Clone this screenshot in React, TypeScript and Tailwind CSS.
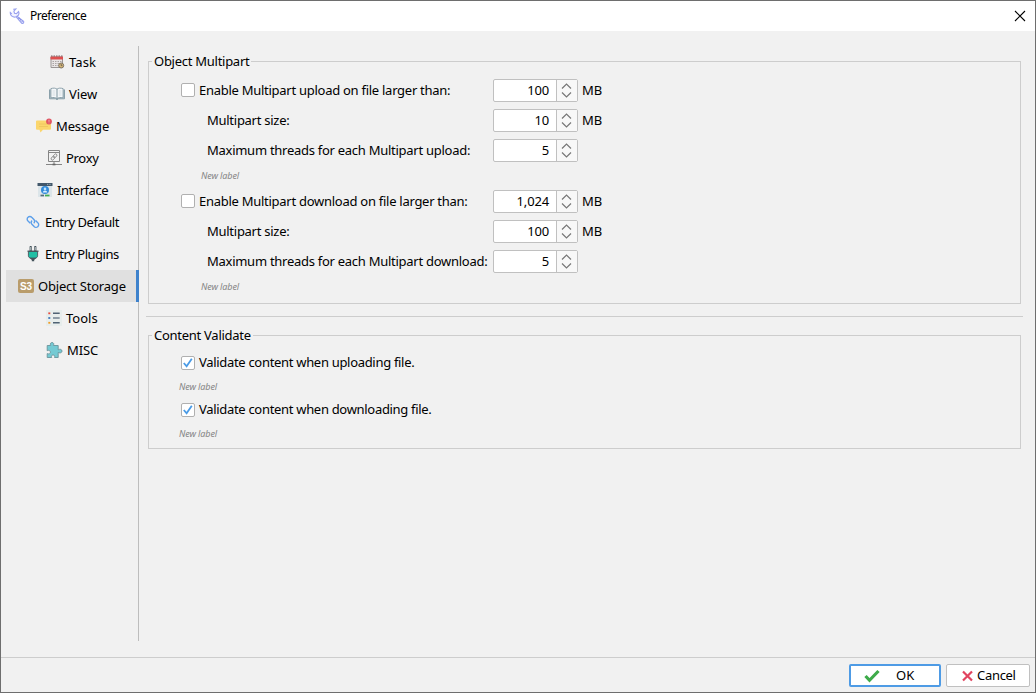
import type { ReactNode } from "react";

function WrenchIcon() {
  return (
    <svg width="16" height="16" viewBox="0 0 16 16" fill="none">
      <path
        d="M4.2 1.2 6.9 1l-2 2.2.6 2 2 .5L9.6 3.6c.8 2.2-.2 4-1.6 4.6l6.6 5.2c.5 1.3-.6 2.3-1.9 1.8L7.2 8.8C3.9 9.9.9 7.4 1.3 4.4l1.5 1.4"
        stroke="#9aa2ee" strokeWidth="1.1" fill="#f3f4ff"
      />
      <path d="m9.5 9.8 4 3.8" stroke="#7a83e4" strokeWidth="1.2" strokeDasharray="1.5 .7" />
    </svg>
  );
}

function TaskIcon() {
  return (
    <svg width="16" height="16" viewBox="0 0 16 16">
      <path d="M2 3h11.5v10.5H2z" fill="#e9e5e5" stroke="#9a9595" />
      <path d="M1.5 2.5H14v3H1.5z" fill="#dd5050" />
      <path d="M2 2h12" stroke="#7b6365" strokeDasharray="1.5 1" />
      <path d="M3.5 7.5H13M3.5 9.5H13M3.5 11.5h7" stroke="#aaa4a4" strokeDasharray="1.5 1" />
      <circle cx="12.2" cy="11.5" r="2.5" fill="#d7b878" stroke="#807566" />
      <path d="M12.2 10v1.6h1.2" fill="none" stroke="#5d554b" strokeWidth=".8" />
    </svg>
  );
}

function ViewIcon() {
  return (
    <svg width="16" height="16" viewBox="0 0 16 16">
      <path d="M.5 3.5v9.3h6L8 13.7l1.5-.9h6V3.5" fill="#aebfc7" stroke="#8aa0aa" />
      <path d="M1.9 2.6c2.6-.8 4.6-.6 6.1.6 1.5-1.2 3.5-1.4 6.1-.6v9.2c-2.6-.6-4.6-.3-6.1.9-1.500-1.200-3.500-1.500-6.100-.9Z" fill="#f5f8fa" stroke="#8ea2ac" />
      <path d="M8 3.200v9.500" stroke="#7d939e" />
      <path d="M3.500 5h2.800M3.500 7h2.800M3.500 9h2.800M9.700 5h2.800M9.700 7h2.800M9.700 9h2.800" stroke="#c8d2d7" strokeWidth=".7" />
    </svg>
  );
}

function MessageIcon() {
  return (
    <svg width="16" height="16" viewBox="0 0 16 16">
      <path d="M1 2.500h13a1 1 0 0 1 1 1v7.300a1 1 0 0 1-1 1H7L4.500 14.500l-1-2.700H1a1 1 0 0 1-1-1V3.500a1 1 0 0 1 1-1Z" fill="#fbd66d" />
      <path d="M3 6h9M3 8.500h9" stroke="#edc65d" strokeWidth=".9" />
      <circle cx="13" cy="3.500" r="2.900" fill="#e05563" />
      <path d="M13 1.800v2M13 4.600v.7" stroke="#f6b7bd" strokeWidth=".9" />
    </svg>
  );
}

function ProxyIcon() {
  return (
    <svg width="16" height="16" viewBox="0 0 16 16" fill="none" stroke="#858585">
      <path d="M2.500.5h11v11h-11zM2.500 2.500h11M8 11.500v3M0 14.500h16" />
      <g transform="rotate(-48 8 7)" strokeWidth=".9">
        <rect x="4.300" y="5.700" width="4.300" height="2.600" rx="1.300" />
        <rect x="7.400" y="5.700" width="4.300" height="2.600" rx="1.300" />
      </g>
      <path d="M6.500 14.500h3" stroke="#666" strokeWidth="1.600" />
    </svg>
  );
}

function InterfaceIcon() {
  return (
    <svg width="16" height="16" viewBox="0 0 16 16">
      <path d="M1 1h14v14H1z" fill="#dce5e9" />
      <path d="M.5 1h15v3H.5z" fill="#43586b" />
      <path d="M10 2.400h4" stroke="#98aab7" strokeDasharray="1 .7" />
      <circle cx="8" cy="8" r="4" fill="#328bda" />
      <circle cx="8" cy="6.900" r="1.300" fill="#bfe4ff" />
      <path d="M5.700 10.500c.5-2.700 4.100-2.700 4.600 0" fill="#d8efff" />
      <path d="M3.500 13.500h3.500" stroke="#536e7b" strokeWidth="1.700" />
      <path d="M8 13.500h4.500" stroke="#43ad52" strokeWidth="1.700" />
    </svg>
  );
}

function LinkIcon() {
  return (
    <svg width="14" height="14" viewBox="0 0 14 14" fill="none" stroke="#5c9fea" strokeWidth="1.400">
      <path d="M4.300 8.300 2 6A2.500 2.500 0 0 1 2 2.300a2.500 2.500 0 0 1 3.700 0l2.200 2.300a2.500 2.500 0 0 1-.2 3.700" />
      <path d="m9.500 5.500 2.300 2.300a2.500 2.500 0 0 1 0 3.800 2.500 2.500 0 0 1-3.700 0L5.900 9.300a2.500 2.500 0 0 1 .2-3.700" />
    </svg>
  );
}

function PlugIcon() {
  return (
    <svg width="14" height="16" viewBox="0 0 14 16">
      <path d="M4.700 1v4M9.300 1v4" stroke="#46545c" strokeWidth="2.200" strokeLinecap="round" />
      <path d="M4.700 1v3.500M9.300 1v3.500" stroke="#e7ecec" strokeWidth=".7" />
      <path d="M2.400 5.500h9.200v4.300c0 1.500-1.300 2.300-2.500 2.500H4.900c-1.200-.2-2.500-1-2.500-2.500Z" fill="#20bfa5" stroke="#46545c" strokeWidth=".9" />
      <path d="M1.500 5.200h11" stroke="#46545c" strokeWidth="1.300" />
      <path d="M3.500 11.700h7L8.200 13.900v1.400H5.800v-1.400Z" fill="#46545c" />
    </svg>
  );
}

function StorageIcon() {
  return (
    <span className="flex h-[14px] w-4 items-center justify-center rounded-[2px] bg-[#b99c6b] pt-px font-['Liberation_Sans',sans-serif] text-[10px] font-bold leading-none text-white">
      S3
    </span>
  );
}

function ToolsIcon() {
  return (
    <svg width="16" height="16" viewBox="0 0 16 16">
      <path d="M0 0h16v16H0z" fill="#e7edec" />
      <path d="M2.300 2.400h2v1.800h-2z" fill="#e84b3d" />
      <path d="M2.300 7.100h2v1.800h-2z" fill="#3d78ba" />
      <path d="M2.300 11.900h2v1.800h-2z" fill="#f19c28" />
      <path d="M7 3.300h6.700M7 12.800h6.700" stroke="#4f6274" strokeWidth="1.400" />
      <path d="M7 8h6.700" stroke="#8494a0" strokeWidth="1.800" />
    </svg>
  );
}

function PuzzleIcon() {
  return (
    <svg width="17" height="17" viewBox="0 0 17 17">
      <path
        d="M1.200 3.500h3.500c-1-1.900.1-3 1.400-3s2.200 1.200 1.300 3h4.800v4.300c2-1.200 3.800-.3 3.800 1.300s-1.800 2.400-3.800 1.300v5.100H8.500c.7-1.700-.1-2.500-1.400-2.500s-2.100.8-1.400 2.500H1.200v-3.900c2 .8 3.200-.2 3.200-1.400S3 7.600 1.200 8.700Z"
        fill="#74cad3" stroke="#6b949c" strokeWidth=".9"
      />
    </svg>
  );
}

type NavItem = { label: string; icon: ReactNode; pad: string; gap: string; track: string };

const navItems: NavItem[] = [
  { label: "Task", icon: <TaskIcon />, pad: "pl-[43px]", gap: "gap-[4px]", track: "tracking-[0.1px]" },
  { label: "View", icon: <ViewIcon />, pad: "pl-[43px]", gap: "gap-[4px]", track: "tracking-[-0.1px]" },
  { label: "Message", icon: <MessageIcon />, pad: "pl-[30px]", gap: "gap-[4px]", track: "tracking-[-0.15px]" },
  { label: "Proxy", icon: <ProxyIcon />, pad: "pl-[40px]", gap: "gap-[4px]", track: "tracking-[-0.3px]" },
  { label: "Interface", icon: <InterfaceIcon />, pad: "pl-[31px]", gap: "gap-[4px]", track: "tracking-[-0.45px]" },
  { label: "Entry Default", icon: <LinkIcon />, pad: "pl-[20px]", gap: "gap-[5px]", track: "tracking-[-0.47px]" },
  { label: "Entry Plugins", icon: <PlugIcon />, pad: "pl-[20px]", gap: "gap-[5px]", track: "tracking-[-0.5px]" },
  { label: "Object Storage", icon: <StorageIcon />, pad: "pl-[12px]", gap: "gap-[4px]", track: "tracking-[-0.2px]" },
  { label: "Tools", icon: <ToolsIcon />, pad: "pl-[40px]", gap: "gap-[4px]", track: "tracking-normal" },
  { label: "MISC", icon: <PuzzleIcon />, pad: "pl-[40px]", gap: "gap-[4px]", track: "tracking-[-0.1px]" },
];

function Sidebar() {
  return (
    <nav className="h-[595px] w-[133px] shrink-0 border-r border-[#bdbdbd]">
      {navItems.map((item) => {
        const active = item.label === "Object Storage";
        return (
          <div
            key={item.label}
            className={`flex h-8 items-center ${item.pad} ${item.gap} ${active ? "-mr-px w-[133px] border-r-[3px] border-[#3e82cc] bg-[#e0e0e0]" : ""}`}
          >
            {item.icon}
            <span className={item.track}>{item.label}</span>
          </div>
        );
      })}
    </nav>
  );
}

function Checkbox({ checked = false }: { checked?: boolean }) {
  return (
    <span className="mr-1 flex size-[14px] shrink-0 items-center justify-center rounded-[2px] border border-[#b0b0b0] bg-white">
      {checked && (
        <svg width="12" height="12" viewBox="0 0 12 12" fill="none">
          <path d="m1.800 6 2.800 3.300 5.200-7.600" stroke="#4a9be6" strokeWidth="1.800" />
        </svg>
      )}
    </span>
  );
}

function Spinner({ value }: { value: string }) {
  return (
    <div className="flex h-[23px] w-[85px] shrink-0 rounded-[2px] border border-[#c0c0c0] bg-white">
      <span className="flex flex-1 items-center justify-end pr-[7px] tracking-[-0.15px]">{value}</span>
      <span className="flex w-[21px] items-center border-l border-[#c0c0c0] bg-[#f8f8f8] pl-1">
        <svg width="11" height="15" viewBox="0 0 11 15" fill="none" stroke="#777" strokeWidth="1.200">
          <path d="m1 5.500 4.500-4.400L10 5.500M1 9.500l4.500 4.400L10 9.500" />
        </svg>
      </span>
    </div>
  );
}

type RowProps = { label: string; value: string; unit?: string; check?: boolean };

function SettingRow({ label, value, unit, check }: RowProps) {
  return (
    <div className="flex h-[30px] items-center">
      <div className={`flex w-[312px] items-center ${check ? "" : "pl-[26px]"}`}>
        {check && <Checkbox />}
        <span className="tracking-[-0.27px]">{label}</span>
      </div>
      <Spinner value={value} />
      {unit && <span className="ml-1">{unit}</span>}
    </div>
  );
}

function Hint({ className }: { className: string }) {
  return <div className={`flex items-center text-[9px] italic tracking-[-0.1px] text-[#858585] ${className}`}>New label</div>;
}

function Group({ title, className, children }: { title: string; className: string; children: ReactNode }) {
  return (
    <fieldset className={`ml-[2px] w-[873px] border border-[#cdcdcd] pl-8 ${className}`}>
      <legend className="-ml-[29px] h-[18px] px-[2px] leading-[18px] tracking-[-0.27px]">{title}</legend>
      {children}
    </fieldset>
  );
}

export default function App() {
  return (
    <div className="flex h-[693px] w-[1036px] flex-col overflow-hidden border border-[#6e6e6e] bg-[#f1f1f1] font-['Noto_Sans',sans-serif] text-[13px] leading-none whitespace-nowrap text-black">
      <header className="flex h-[30px] shrink-0 items-center justify-between bg-white pr-[9px] pl-2">
        <div className="flex items-center gap-[5px] text-[12px]">
          <WrenchIcon />
          <span className="tracking-[-0.48px]">Preference</span>
        </div>
        <svg width="12" height="12" viewBox="0 0 12 12" stroke="#000" strokeWidth="1.100">
          <path d="m1 1 10 10M11 1 1 11" />
        </svg>
      </header>

      <div className="flex h-[626px] shrink-0 pt-[15px] pl-[5px]">
        <Sidebar />
        <main className="ml-[7px] w-[877px]">
          <Group title="Object Multipart" className="mt-[6px] h-[252px]">
            <div className="mt-[5px]">
              <SettingRow check label="Enable Multipart upload on file larger than:" value="100" unit="MB" />
              <SettingRow label="Multipart size:" value="10" unit="MB" />
              <SettingRow label="Maximum threads for each Multipart upload:" value="5" />
              <Hint className="h-[21px] pl-5" />
              <SettingRow check label="Enable Multipart download on file larger than:" value="1,024" unit="MB" />
              <SettingRow label="Multipart size:" value="100" unit="MB" />
              <SettingRow label="Maximum threads for each Multipart download:" value="5" />
              <Hint className="h-[21px] pl-5" />
            </div>
          </Group>
          <div className="mt-3 h-px bg-[#cdcdcd]" />
          <Group title="Content Validate" className="mt-[9px] h-[123px]">
            <div className="mt-[4px]">
              <div className="flex h-[29px] items-center"><Checkbox checked /><span className="tracking-[-0.31px]">Validate content when uploading file.</span></div>
              <Hint className="-ml-[2px] h-[18px]" />
              <div className="flex h-[29px] items-center"><Checkbox checked /><span className="tracking-[-0.31px]">Validate content when downloading file.</span></div>
              <Hint className="-ml-[2px] h-[18px]" />
            </div>
          </Group>
        </main>
      </div>

      <footer className="flex h-[35px] shrink-0 items-start justify-end gap-[5px] border-t border-[#cdcdcd] pt-[6px] pr-[5px]">
        <button className="flex h-[23px] w-[92px] items-center rounded-[2px] border-2 border-[#4e9be5] bg-white pl-[13px]">
          <svg width="16" height="14" viewBox="0 0 16 14" fill="none">
            <path d="m1.500 7 4 4.300L14.500 2" stroke="#3eab4a" strokeWidth="3.200" />
          </svg>
          <span className="ml-4">OK</span>
        </button>
        <button className="flex h-[23px] w-[84px] items-center rounded-[2px] border border-[#c0c0c0] bg-white pl-[15px]">
          <svg width="11" height="12" viewBox="0 0 11 12" fill="none" stroke="#e1445f" strokeWidth="2.200">
            <path d="m1 1.500 9 9M10 1.500l-9 9" />
          </svg>
          <span className="ml-1 tracking-[-0.3px]">Cancel</span>
        </button>
      </footer>
    </div>
  );
}
